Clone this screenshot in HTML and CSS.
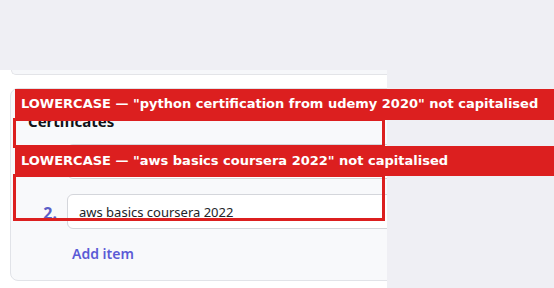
FILE: index.html
```html
<!DOCTYPE html>
<html lang="en">
<head>
<meta charset="utf-8">
<title>Certificates</title>
<link rel="stylesheet" href="styles.css">
</head>
<body>
<div class="top-space"></div>
<main class="panel">
  <div class="prev-card"></div>
  <section class="card">
    <h3 class="card-title">Certificates</h3>
    <ol class="items">
      <li class="item">
        <span class="num">1.</span>
        <input class="field" type="text" value="python certification from udemy 2020">
      </li>
      <li class="item">
        <span class="num">2.</span>
        <input class="field" type="text" value="aws basics coursera 2022">
      </li>
    </ol>
    <button class="add" type="button">Add item</button>
  </section>
</main>

<div class="flag-box box-1"></div>
<div class="flag-label label-1">LOWERCASE — "python certification from udemy 2020" not capitalised</div>
<div class="flag-box box-2"></div>
<div class="flag-label label-2">LOWERCASE — "aws basics coursera 2022" not capitalised</div>
</body>
</html>
```

FILE: styles.css
```css
html, body {
  margin: 0;
  padding: 0;
}

body {
  position: relative;
  width: 554px;
  height: 288px;
  overflow: hidden;
  background: #efeff4;
  font-family: "Noto Sans", "Open Sans", sans-serif;
  color: #1f2024;
}

.top-space {
  height: 70px;
}

.panel {
  width: 387px;
  height: 218px;
  background: #ffffff;
  overflow: hidden;
}

.prev-card {
  margin-left: 11px;
  width: 420px;
  height: 4px;
  background: #f6f7fa;
  border-left: 1px solid #e3e4e8;
  border-bottom: 1px solid #e3e4e8;
  border-bottom-left-radius: 8px;
}

.card {
  box-sizing: border-box;
  margin: 13px 0 0 10px;
  width: 420px;
  height: 193px;
  padding: 22px 0 0 17px;
  background: #f8f9fb;
  border: 1px solid #e1e3e8;
  border-radius: 8px;
}

.card-title {
  margin: 0;
  font-size: 15px;
  line-height: 20px;
  font-weight: 700;
  color: #111318;
}

.items {
  list-style: none;
  margin: 13px 0 0 0;
  padding: 0;
  display: flex;
  flex-direction: column;
  gap: 15px;
}

.item {
  display: flex;
  align-items: center;
  gap: 10px;
}

.num {
  width: 29px;
  text-align: right;
  font-size: 16px;
  line-height: 20px;
  font-weight: 700;
  color: #5b5fc7;
  padding-top: 2px;
}

.field {
  box-sizing: border-box;
  width: 340px;
  height: 35px;
  padding: 0 11px;
  margin: 0;
  border: 1px solid #d4d6db;
  border-radius: 6px;
  background: #ffffff;
  font-family: "Noto Sans", "Open Sans", sans-serif;
  font-size: 13px;
  color: #222328;
  outline: none;
}

.add {
  display: block;
  margin: 15px 0 0 44px;
  padding: 0;
  border: 0;
  background: none;
  font-family: "Noto Sans", "Open Sans", sans-serif;
  font-size: 14px;
  line-height: 20px;
  font-weight: 600;
  color: #5b5bd6;
  cursor: pointer;
}

.flag-box {
  position: absolute;
  left: 13px;
  width: 372px;
  box-sizing: border-box;
  border: 3px solid #dc1f1f;
}

.box-1 {
  top: 118px;
  height: 30px;
}

.box-2 {
  top: 174px;
  height: 47px;
}

.flag-label {
  position: absolute;
  left: 15px;
  right: 0;
  padding: 0 6px;
  background: #dc1f1f;
  color: #ffffff;
  font-family: "DejaVu Sans", sans-serif;
  font-weight: 700;
  font-size: 13px;
  line-height: 29px;
  white-space: nowrap;
}

.label-1 {
  top: 89px;
  height: 31px;
}

.label-2 {
  top: 146px;
  height: 30px;
}
```
